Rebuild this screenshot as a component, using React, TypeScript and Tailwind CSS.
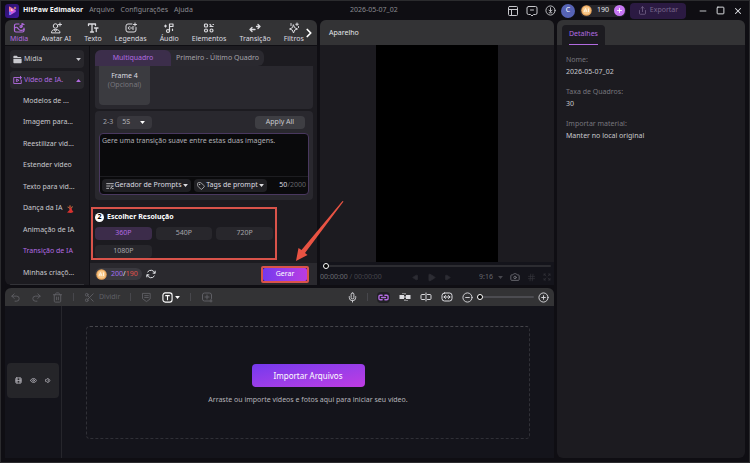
import React, { useState } from 'react';
import {
  Camera,
  ChevronRight,
  CircleMinus,
  CirclePlus,
  Expand,
  Eye,
  Film,
  Hash,
  Mic,
  Minus,
  PanelsTopLeft,
  Play,
  Plus,
  Redo2,
  Scissors,
  Share,
  Square,
  Tag,
  Trash2,
  Undo2,
  Volume1,
  X,
} from 'lucide-react';

const iconProps = {
  viewBox: '0 0 24 24',
  fill: 'none',
  stroke: 'currentColor',
  strokeWidth: 2,
  strokeLinecap: 'round' as const,
  strokeLinejoin: 'round' as const,
};

const Logo = () => (
  <svg viewBox="0 0 28 28" className="size-[14px]">
    <defs>
      <linearGradient id="logoBg" x1="0" y1="0" x2="1" y2="1">
        <stop offset="0" stopColor="#2a1266" />
        <stop offset="1" stopColor="#4317a0" />
      </linearGradient>
      <linearGradient id="logoPlay" x1="0" y1="0" x2="1" y2="1">
        <stop offset="0" stopColor="#ff8a6b" />
        <stop offset="0.5" stopColor="#e35bd8" />
        <stop offset="1" stopColor="#7d5cff" />
      </linearGradient>
    </defs>
    <rect width="28" height="28" rx="6" fill="url(#logoBg)" />
    <path d="M8 7 Q8 4 11 6 L21 12 Q23 14 21 16 L11 22 Q8 23 8 20Z" fill="url(#logoPlay)" />
    <path d="M8 15 L13 17 L10 22 Q8 22 8 20Z" fill="#5f7dff" />
    <path d="M12 9 L17 13 L12 14Z" fill="#ffd3c7" />
    <path d="M20 5 L21 7 L23 8 L21 9 L20 11 L19 9 L17 8 L19 7Z" fill="#ffb36b" />
  </svg>
);

const MediaIcon = () => (
  <svg {...iconProps} strokeWidth={2.4} className="size-[12px]">
    <path d="M12 4H6a3 3 0 0 0-3 3v10a3 3 0 0 0 3 3h13a3 3 0 0 0 3-3v-5" />
    <path d="M3 12c4-3 6-1 8 2s6 4 11 1" />
    <circle cx="16" cy="9" r="2" />
    <path d="M18 9V3l4 2" />
  </svg>
);

const AvatarIcon = () => (
  <svg {...iconProps} className="size-[12px]">
    <circle cx="11" cy="8" r="4.5" />
    <path d="M3 21c0-4 3-6 8-6s9 2 9 6z" />
    <path d="M9 16l2 3 2-3M20 2v6M17 5h6" />
  </svg>
);

const TextIcon = () => (
  <svg {...iconProps} strokeWidth={2.6} className="size-[12px]">
    <path d="M3 7V4h14v3M10 4v16M7 20h6M15 12h7M18.500 12v7" />
  </svg>
);

const CaptionIcon = () => (
  <svg {...iconProps} className="size-[12px]">
    <path d="M14 4H6a4 4 0 0 0-4 4v8a4 4 0 0 0 4 4h12a4 4 0 0 0 4-4v-5" />
    <path d="M10.500 10a2.500 2.500 0 1 0 0 4M17.500 10a2.500 2.500 0 1 0 0 4M17 5h6M20 2v6" />
  </svg>
);

const AudioIcon = () => (
  <svg {...iconProps} strokeWidth={2.4} className="size-[12px]">
    <circle cx="10" cy="18" r="3" />
    <path d="M13 18V4h7v5h-7M19 14v3M3 8h4M5 6v4" />
  </svg>
);

const ElementsIcon = () => (
  <svg {...iconProps} strokeWidth={2.4} className="size-[12px]">
    <rect x="3" y="4" width="6" height="6" rx="2" />
    <circle cx="6" cy="17" r="3" />
    <circle cx="17" cy="17" r="3" />
    <path d="M14 5l2 2M20 5h1M14 9h6" />
  </svg>
);

const TransitionIcon = () => (
  <svg {...iconProps} strokeWidth={2.6} className="size-[12px]">
    <path d="M2 15h10M6 11l-4 4 4 4M15 9h7M18 5l4 4-4 4" />
  </svg>
);

const FilterIcon = () => (
  <svg {...iconProps} className="size-[12px]">
    <path d="M11 6l2.500 5.500L19 14l-5.500 2L11 22l-2.500-6L3 14l5.500-2.500z" />
    <path d="M18 2v5M15.500 4.500h5M6 3v4M21 9v2" />
  </svg>
);

const AddVideoIcon = () => (
  <svg {...iconProps} strokeWidth={2.4} className="size-[9px] shrink-0">
    <path d="M15 4H2v16h20v-9M9 9v6l6-3zM20 1v7M16.500 4.500h7" />
  </svg>
);

const FolderIcon = () => (
  <svg viewBox="0 0 24 24" fill="currentColor" className="size-[9px] shrink-0">
    <path d="M1 4a2 2 0 0 1 2-2h7l3 3h7a2 2 0 0 1 2 2v1H1zM1 10h22v10a2 2 0 0 1-2 2H3a2 2 0 0 1-2-2z" />
  </svg>
);

const PromptIcon = () => (
  <svg {...iconProps} strokeWidth={2.4} className="size-[8px] shrink-0">
    <path d="M2 5h20M2 12h9M2 19h6M15 12h7M13 19l6-5M18 20h4" />
  </svg>
);

const RefreshIcon = () => (
  <svg {...iconProps} strokeWidth={2.4} className="size-[10px]">
    <path d="M21 10A9.500 9.500 0 0 0 4 7M3 14a9.500 9.500 0 0 0 17 3M22 5v5h-5M2 19v-5h5" />
  </svg>
);

const Caret = ({ up = false }: { up?: boolean }) => (
  <svg viewBox="0 0 8 5" fill="currentColor" className="h-[3px] w-[5px] shrink-0">
    <path d={up ? 'M0 5L4 0l4 5z' : 'M0 0l4 5 4-5z'} />
  </svg>
);

const Coin = () => (
  <svg viewBox="0 0 22 22" className="size-[11px] shrink-0">
    <circle cx="11" cy="11" r="10.500" fill="#e9a55c" />
    <circle cx="11" cy="11" r="8" fill="#f9c98b" />
    <path d="M6 14l3-7 3 7M7 12h4M15 7v7" fill="none" stroke="#fff3df" strokeWidth="2" />
  </svg>
);

const TextBoxIcon = () => (
  <svg {...iconProps} strokeWidth={2.4} className="size-[11px]">
    <rect x="2" y="2" width="20" height="20" rx="5" />
    <path d="M8 8h8M12 8v9" />
  </svg>
);

const MarkerIcon = () => (
  <svg {...iconProps} className="size-[11px]">
    <path d="M4 3h16v12l-8 6-8-6zM8 8h8M8 12h8" />
  </svg>
);

const AddClipIcon = () => (
  <svg {...iconProps} className="size-[12px]">
    <path d="M21 15v-7a4 4 0 0 0-4-4H7a4 4 0 0 0-4 4v8a4 4 0 0 0 4 4h9M12 8v8M8 12h8M17 20h5M20 17v5" />
  </svg>
);

const MagnetIcon = () => (
  <svg {...iconProps} strokeWidth={3} className="size-[11px]">
    <path d="M9 7H5a3 3 0 0 0-3 3v4a3 3 0 0 0 3 3h4M15 7h4a3 3 0 0 1 3 3v4a3 3 0 0 1-3 3h-4M8 12h8" />
  </svg>
);

const SnapIcon = () => (
  <svg viewBox="0 0 24 24" fill="currentColor" className="size-[12px]">
    <path d="M1 8h9v8H1zM14 8h9v8h-9zM11 4h2v3h-2zM11 17h2v3h-2zM10 11h4v2h-4zM7 4h2v2H7zM15 18h2v2h-2z" />
  </svg>
);

const SplitIcon = () => (
  <svg {...iconProps} className="size-[12px]">
    <path d="M9 7H4a2 2 0 0 0-2 2v6a2 2 0 0 0 2 2h5M15 7h5a2 2 0 0 1 2 2v6a2 2 0 0 1-2 2h-5M12 4v16" />
  </svg>
);

const FitIcon = () => (
  <svg {...iconProps} className="size-[12px]">
    <rect x="2" y="4" width="20" height="16" rx="5" />
    <path d="M6 12h12M9 9l-3 3 3 3M15 9l3 3-3 3" />
  </svg>
);

const tools = [
  { label: 'Mídia', icon: <MediaIcon /> },
  { label: 'Avatar AI', icon: <AvatarIcon /> },
  { label: 'Texto', icon: <TextIcon /> },
  { label: 'Legendas', icon: <CaptionIcon /> },
  { label: 'Áudio', icon: <AudioIcon /> },
  { label: 'Elementos', icon: <ElementsIcon /> },
  { label: 'Transição', icon: <TransitionIcon /> },
  { label: 'Filtros', icon: <FilterIcon /> },
];

const aiItems = [
  'Modelos de ...',
  'Imagem para...',
  'Reestilizar vid...',
  'Estender vídeo',
  'Texto para vid...',
  'Dança da IA',
  'Animação de IA',
  'Transição de IA',
  'Minhas criaçõ...',
];

const resolutions = ['360P', '540P', '720P', '1080P'];

const details = [
  { label: 'Nome:', value: '2026-05-07_02' },
  { label: 'Taxa de Quadros:', value: '30' },
  { label: 'Importar material:', value: 'Manter no local original' },
];

const DancerIcon = () => (
  <svg viewBox="0 0 16 16" className="size-[8px]">
    <circle cx="8" cy="3" r="2.500" fill="#8a4a2c" />
    <path d="M6 5h5l1 5 3 4-5 2-8-1 5-5z" fill="#d8322f" />
    <path d="M7 6L3 4M10 6l4-3" stroke="#c98252" strokeWidth="1.500" />
  </svg>
);

const TitleBar = () => (
  <header className="flex h-[19px] items-center pr-[6px] pl-1">
    <Logo />
    <h1 className="ml-1 text-[7px] font-bold text-gray-100">HitPaw Edimakor</h1>
    <nav className="ml-[6px] flex gap-[6px] text-[7px] text-[#8b8b91]">
      <button type="button">Arquivo</button>
      <button type="button">Configurações</button>
      <button type="button">Ajuda</button>
    </nav>
    <p className="flex-1 pl-12 text-center text-[7px] text-[#8b8b91]">2026-05-07_02</p>
    <div className="flex items-center gap-[7px] text-[#c7c7cc]">
      <button type="button" aria-label="Layout"><PanelsTopLeft className="size-[12px]" /></button>
      <button type="button" aria-label="Mensagens">
        <svg {...iconProps} className="size-[12px]">
          <path d="M5 3h14a3 3 0 0 1 3 3v10a3 3 0 0 1-3 3h-4l-3 3-3-3H5a3 3 0 0 1-3-3V6a3 3 0 0 1 3-3zM9 10h6" />
        </svg>
      </button>
      <button type="button" aria-label="Downloads">
        <svg {...iconProps} className="size-[11px]">
          <circle cx="12" cy="12" r="10" />
          <path d="M12 6v8M8.500 11l3.500 3.500 3.500-3.500M9 17h6" />
        </svg>
      </button>
    </div>
    <button type="button" className="ml-[5px] size-[14px] rounded-full bg-[#5663b5] text-[7px] text-white">
      C
    </button>
    <div className="ml-[5px] flex h-3 items-center gap-[5px] rounded-full bg-[#27262b] px-px text-[7px] text-gray-200">
      <Coin />
      190
      <button type="button" aria-label="Comprar créditos" className="rounded-full bg-[#c777f3] p-[2px] text-white">
        <Plus className="size-[7px]" strokeWidth={3} />
      </button>
    </div>
    <button
      type="button"
      className="ml-1 flex h-4 w-[56px] items-center justify-center gap-[3px] rounded-sm bg-[#2b1a42] text-[7px] text-[#77668b]"
    >
      <Share className="size-[9px]" />
      Exportar
    </button>
    <div className="ml-[12px] flex gap-[8px] text-gray-200">
      <button type="button" aria-label="Minimizar"><Minus className="size-[10px]" /></button>
      <button type="button" aria-label="Maximizar"><Square className="size-[9px]" strokeWidth={2.5} /></button>
      <button type="button" aria-label="Fechar"><X className="size-[10px]" strokeWidth={2.5} /></button>
    </div>
  </header>
);

const ToolTabs = () => (
  <nav className="flex h-[25px] items-center justify-between rounded-t-md bg-[#333335] pr-[5px] pl-[5px]">
    <div className="flex gap-[13px]">
      {tools.map(({ label, icon }, i) => (
        <button
          key={label}
          type="button"
          className={`flex flex-col items-center text-[7px] leading-[10px] ${i === 0 ? 'text-[#b26be0]' : 'text-[#dcdce0]'}`}
        >
          {icon}
          {label}
        </button>
      ))}
    </div>
    <button type="button" aria-label="Mais" className="-mx-1 text-white">
      <ChevronRight className="size-[14px]" strokeWidth={3} />
    </button>
  </nav>
);

const Sidebar = () => (
  <aside className="flex w-[84px] shrink-0 flex-col overflow-hidden rounded-bl-md bg-[#1c1b20] px-[5px] pt-1 text-[7px] text-[#c9c9ce]">
    <button type="button" className="flex h-[18px] shrink-0 items-center gap-[2px] rounded bg-[#28272c] px-[3px]">
      <FolderIcon />
      <span className="flex-1 text-left">Mídia</span>
      <Caret />
    </button>
    <button
      type="button"
      className="mt-[3px] flex h-[18px] shrink-0 items-center gap-[2px] rounded bg-[#28272c] px-[3px] text-[#b26be0]"
    >
      <AddVideoIcon />
      <span className="flex-1 text-left">Vídeo de IA.</span>
      <Caret up />
    </button>
    <ul className="flex flex-1 flex-col pt-px">
      {aiItems.map((item) => (
        <li key={item} className="flex flex-1 items-center">
          <a
            href="#"
            className={`flex items-center gap-1 pl-[13px] whitespace-nowrap ${item === 'Transição de IA' ? 'text-[#b26be0]' : ''}`}
          >
            {item}
            {item === 'Dança da IA' && <DancerIcon />}
          </a>
        </li>
      ))}
    </ul>
    <div className="h-px bg-[#333338]" />
  </aside>
);

const TransitionForm = () => {
  const [prompt, setPrompt] = useState('Gere uma transição suave entre estas duas imagens.');
  const [resolution, setResolution] = useState('360P');

  return (
    <section className="flex min-w-0 flex-1 flex-col bg-[#1c1b20] text-[7px]">
      <div className="pt-1 pr-1 pl-[5px]">
        <div className="flex h-4 w-[169px] rounded-t-md rounded-br-md bg-[#2a292f] text-[#a5a4aa]">
          <button type="button" className="w-[76px] rounded-t-md bg-[#3c2e4b] text-[#b26be0]">Multiquadro</button>
          <button type="button" className="flex-1">Primeiro - Último Quadro</button>
        </div>
        <div className="rounded-b bg-[#29282e] px-1 pb-1">
          <div className="h-[39px] w-[51px] rounded-b bg-[#3b3b40] pt-[5px] text-center leading-[9px] text-[#dcdce0]">
            Frame 4
            <p className="text-[#77767d]">(Opcional)</p>
          </div>
        </div>

        <div className="mt-[2px] rounded bg-[#29282e] p-1 pb-[5px]">
          <div className="flex h-[15px] items-center pr-1 pl-1 text-[#a5a4aa]">
            <label htmlFor="duration">2-3</label>
            <div className="relative ml-1">
              <select
                id="duration"
                className="block h-[13px] w-[35px] appearance-none rounded-sm bg-[#38373d] pl-[5px] text-[#b5b5ba]"
              >
                <option>5S</option>
              </select>
              <span className="pointer-events-none absolute inset-y-0 right-[7px] flex items-center text-white">
                <Caret />
              </span>
            </div>
            <button type="button" className="ml-auto h-[13px] w-[50px] rounded-sm bg-[#3e3e43] text-[#c9c9ce]">
              Apply All
            </button>
          </div>
          <div className="mt-[3px] rounded border border-[#49385f] bg-[#0a0a0c]">
            <textarea
              aria-label="Prompt"
              value={prompt}
              onChange={(e) => setPrompt(e.target.value)}
              className="block h-[42px] w-full resize-none px-[2px] pt-[2px] leading-[10px] text-[#b0b0b5] outline-none"
            />
            <div className="flex items-center gap-[3px] border-t border-[#1d1d21] px-[2px] py-[2px] text-[#dcdce0]">
              <button type="button" className="flex h-[13px] w-[89px] items-center justify-center gap-px rounded-sm bg-[#202024]">
                <PromptIcon />
                Gerador de Prompts
                <Caret />
              </button>
              <button type="button" className="flex h-[13px] w-[73px] items-center justify-center gap-px rounded-sm bg-[#202024]">
                <Tag className="size-[8px]" />
                Tags de prompt
                <Caret />
              </button>
              <p className="ml-auto text-[#66656b]">
                <span className="text-[#dcdce0]">{prompt.length}</span>/2000
              </p>
            </div>
          </div>
        </div>
      </div>

      <div className="mt-[7px] mr-[40px] ml-px border-2 border-[#d9534a] px-[2px] pt-[3px]">
        <h2 className="flex items-center gap-[3px] text-[7px] leading-[10px] font-bold text-white">
          <span className="flex size-[9px] items-center justify-center rounded-full bg-white text-[7px] text-black">2</span>
          Escolher Resolução
        </h2>
        <div className="mt-[5px] grid grid-cols-3 gap-x-1 gap-y-[5px]">
          {resolutions.map((item) => (
            <button
              key={item}
              type="button"
              onClick={() => setResolution(item)}
              className={`h-[13px] rounded-sm ${resolution === item ? 'bg-[#3c2c4a] text-[#b26be0]' : 'bg-[#28272c] text-[#a5a4aa]'}`}
            >
              {item}
            </button>
          ))}
        </div>
      </div>

      <div className="mt-auto flex h-[22px] shrink-0 items-center bg-[#2a292e] pr-[8px] pl-[5px]">
        <div className="flex h-3 items-center gap-1 rounded-full bg-[#3a393f] pr-1 pl-px text-gray-200">
          <Coin />
          <span><span className="text-[#a46ff0]">200</span>/<span className="text-[#e0524c]">190</span></span>
        </div>
        <button type="button" aria-label="Atualizar" className="ml-1 text-gray-200">
          <RefreshIcon />
        </button>
        <div className="relative ml-auto rounded-xs border-2 border-[#d9534a]">
          <button
            type="button"
            className="block h-[13px] w-[44px] rounded-xs bg-linear-to-r from-[#7438ee] to-[#bb3be2] text-white"
          >
            Gerar
          </button>
          <svg viewBox="0 0 50 70" className="absolute bottom-full left-[32px] z-10 h-[70px] w-[50px]" fill="#e85343">
            <path d="M48.500 3.500L10 55l2.500 2L1 63l2.500-13 3 2L47.500 3z" />
          </svg>
        </div>
      </div>
    </section>
  );
};

const Preview = () => (
  <section className="flex min-w-0 flex-1 flex-col overflow-hidden rounded-t-md bg-[#1c1b20] text-[7px]">
    <h2 className="flex h-[25px] shrink-0 items-center bg-[#333335] pt-px pl-[9px] text-gray-200">Aparelho</h2>
    <div className="flex flex-1 justify-center">
      <div className="w-[122px] bg-black" />
    </div>
    <div className="bg-[#14141b] px-[3px]">
      <input
        type="range"
        aria-label="Posição"
        defaultValue={0}
        className="block h-[7px] w-full appearance-none bg-transparent [&::-webkit-slider-runnable-track]:h-[2px] [&::-webkit-slider-runnable-track]:rounded-full [&::-webkit-slider-runnable-track]:bg-[#2c2c31] [&::-webkit-slider-thumb]:-mt-[2px] [&::-webkit-slider-thumb]:size-[6px] [&::-webkit-slider-thumb]:appearance-none [&::-webkit-slider-thumb]:rounded-full [&::-webkit-slider-thumb]:border [&::-webkit-slider-thumb]:border-white [&::-webkit-slider-thumb]:bg-black"
      />
      <div className="-ml-[3px] flex h-4 items-center text-[#46464d]">
        <time><span className="text-[#6c6c73]">00:00:00</span> / 00:00:00</time>
        <div className="ml-[30px] flex items-center gap-[8px] text-[#2c2c33]">
          <button type="button" aria-label="Quadro anterior"><Play className="size-[7px] rotate-180 fill-current" /></button>
          <button type="button" aria-label="Reproduzir"><Play className="size-[9px] fill-current" /></button>
          <button type="button" aria-label="Próximo quadro"><Play className="size-[7px] fill-current" /></button>
        </div>
        <div className="ml-auto flex items-center gap-[7px]">
          <div className="relative">
            <select aria-label="Proporção" className="block w-[24px] appearance-none text-[#66666d]">
              <option>9:16</option>
            </select>
            <span className="pointer-events-none absolute inset-y-0 right-0 flex items-center"><Caret /></span>
          </div>
          <button type="button" aria-label="Capturar" className="text-[#77777e]"><Camera className="size-[10px]" /></button>
          <button type="button" aria-label="Grade" className="text-[#33333a]"><Hash className="size-[9px]" /></button>
          <button type="button" aria-label="Tela cheia" className="text-[#33333a]"><Expand className="size-[8px]" /></button>
        </div>
      </div>
    </div>
  </section>
);

const Timeline = () => (
  <section className="flex flex-1 flex-col overflow-hidden rounded-t-md bg-[#14141b] text-[7px]">
    <div className="flex h-[18px] shrink-0 items-center justify-between bg-[#333335] pr-[5px] pl-[5px]">
      <div className="flex items-center gap-[10px] text-[#5f5f65]">
        <button type="button" aria-label="Desfazer"><Undo2 className="size-[11px]" /></button>
        <button type="button" aria-label="Refazer"><Redo2 className="size-[11px]" /></button>
        <button type="button" aria-label="Excluir"><Trash2 className="size-[11px]" /></button>
        <span className="h-2 w-px bg-[#47474c]" />
        <button type="button" className="flex items-center gap-1">
          <Scissors className="size-[11px]" />
          Dividir
        </button>
        <span className="h-2 w-px bg-[#47474c]" />
        <button type="button" aria-label="Marcador"><MarkerIcon /></button>
        <button type="button" aria-label="Adicionar texto" className="flex items-center gap-[2px] text-white">
          <TextBoxIcon />
          <Caret />
        </button>
        <span className="h-2 w-px bg-[#47474c]" />
        <button type="button" aria-label="Adicionar clipe"><AddClipIcon /></button>
      </div>
      <div className="flex items-center gap-[9px] text-[#dcdce0]">
        <button type="button" aria-label="Gravar"><Mic className="size-[11px]" /></button>
        <span className="h-2 w-px bg-[#47474c]" />
        <button type="button" aria-label="Vincular" className="rounded-sm bg-[#202024] px-px text-[#b26be0]"><MagnetIcon /></button>
        <button type="button" aria-label="Encaixar"><SnapIcon /></button>
        <button type="button" aria-label="Separar"><SplitIcon /></button>
        <button type="button" aria-label="Ajustar"><FitIcon /></button>
        <div className="flex items-center gap-1">
          <button type="button" aria-label="Reduzir zoom"><CircleMinus className="size-[11px]" /></button>
          <input
            type="range"
            aria-label="Zoom"
            defaultValue={0}
            className="block h-[7px] w-[57px] appearance-none bg-transparent [&::-webkit-slider-runnable-track]:h-[2px] [&::-webkit-slider-runnable-track]:rounded-full [&::-webkit-slider-runnable-track]:bg-[#4c4c51] [&::-webkit-slider-thumb]:-mt-[2px] [&::-webkit-slider-thumb]:size-[6px] [&::-webkit-slider-thumb]:appearance-none [&::-webkit-slider-thumb]:rounded-full [&::-webkit-slider-thumb]:border [&::-webkit-slider-thumb]:border-white [&::-webkit-slider-thumb]:bg-black"
          />
          <button type="button" aria-label="Aumentar zoom"><CirclePlus className="size-[11px]" /></button>
        </div>
      </div>
    </div>
    <div className="flex flex-1">
      <div className="flex w-[57px] items-center border-r border-[#26262c] px-[2px] pb-[3px]">
        <div className="flex h-[35px] w-full items-center justify-center gap-2 rounded-sm bg-[#252529] text-[#a5a4aa]">
          <Film className="size-[7px]" strokeWidth={3} />
          <Eye className="size-[7px]" strokeWidth={3} />
          <Volume1 className="size-[7px]" strokeWidth={3} />
        </div>
      </div>
      <div className="flex flex-1 px-[24px] pt-5 pb-[19px]">
        <div className="flex flex-1 flex-col items-center justify-center rounded border border-dashed border-[#303037] border-t-[#45454b] pt-1 text-center">
          <button
            type="button"
            className="h-[23px] w-[113px] rounded bg-linear-to-br from-[#7438ee] to-[#bf3be2] text-[8px] text-white"
          >
            Importar Arquivos
          </button>
          <p className="mt-[8px] leading-[10px] text-[#b5b5ba]">
            Arraste ou importe vídeos e fotos aqui para iniciar seu vídeo.
          </p>
        </div>
      </div>
    </div>
  </section>
);

const DetailsPanel = () => (
  <aside className="w-[188px] shrink-0 overflow-hidden rounded-md bg-[#1c1b20] text-[7px]">
    <div className="flex h-[25px] items-end bg-[#333335] pl-[5px]">
      <button type="button" className="h-5 rounded-t bg-[#1c1b20] px-[7px] text-[#b26be0]">
        <span className="flex h-full items-center border-b border-[#b26be0]">Detalhes</span>
      </button>
    </div>
    <dl className="space-y-2 px-[9px] pt-[9px] leading-[12px]">
      {details.map(({ label, value }) => (
        <div key={label}>
          <dt className="text-[#77767d]">{label}</dt>
          <dd className="text-[#c9c9ce]">{value}</dd>
        </div>
      ))}
    </dl>
  </aside>
);

export default function App() {
  return (
    <div className="flex min-h-screen flex-col border border-[#2b2b2e] bg-[#0f0e13] font-['Noto_Sans','Open_Sans',sans-serif]">
      <TitleBar />
      <main className="flex flex-1 gap-[3px] px-1 pb-1">
        <div className="flex min-w-0 flex-1 flex-col gap-[3px]">
          <div className="flex h-[265px] gap-[3px]">
            <div className="flex w-[312px] shrink-0 flex-col gap-px">
              <ToolTabs />
              <div className="flex min-h-0 flex-1 gap-px">
                <Sidebar />
                <TransitionForm />
              </div>
            </div>
            <Preview />
          </div>
          <Timeline />
        </div>
        <DetailsPanel />
      </main>
    </div>
  );
}
